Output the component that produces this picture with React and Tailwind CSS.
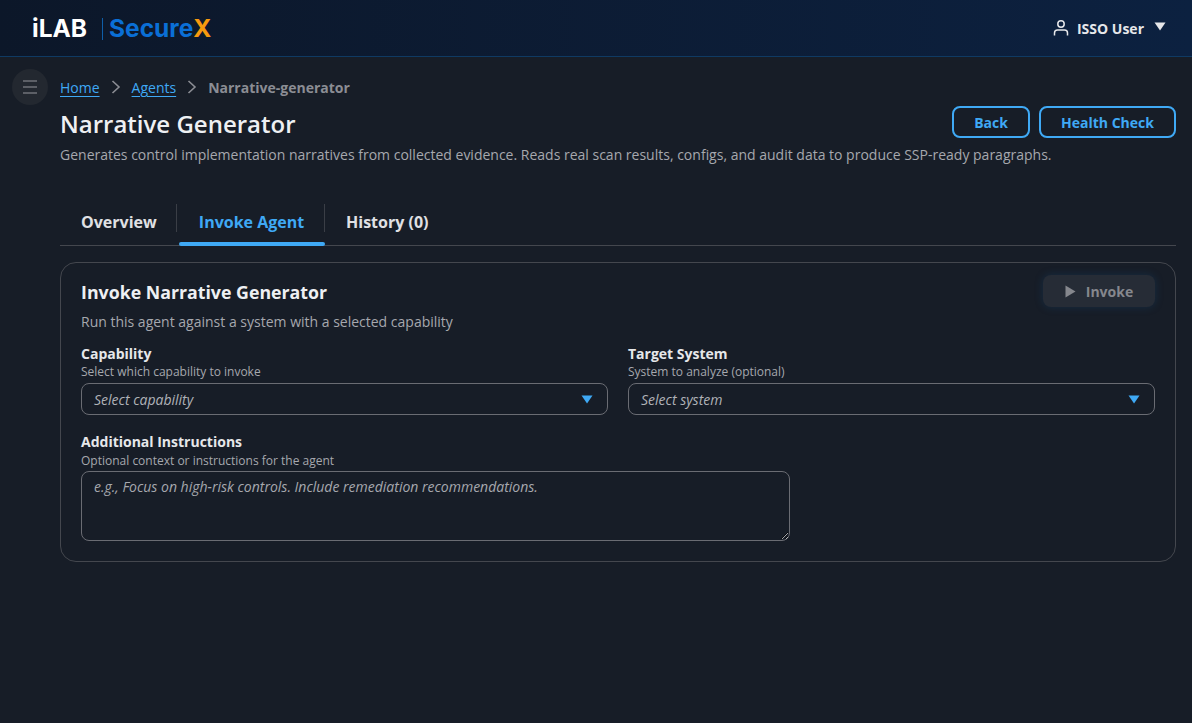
import React from "react";

function Chevron() {
  return (
    <svg width="16" height="16" viewBox="0 0 16 16" fill="none" className="mx-[8px]">
      <path d="M4.5 2 11 8 4.5 14" stroke="#8b8d94" strokeWidth="1.6" />
    </svg>
  );
}

function Caret({ color, w = 12, h = 9 }) {
  return (
    <svg width={w} height={h} viewBox="0 0 12 9">
      <path d="M0.5 0.5h11L6 8.5z" fill={color} />
    </svg>
  );
}

function Field({ label, help, placeholder }) {
  return (
    <div>
      <div className="text-[14px] leading-[19px] font-bold text-[#e6e7ea]">{label}</div>
      <div className="mt-[1px] text-[12px] leading-[16px] text-[#a6a8ae] mb-[3px]">{help}</div>
      <div className="h-[32px] flex items-center justify-between rounded-[8px] border border-[#6a6c73] pl-[12px] pr-[14px]">
        <span className="text-[14px] italic text-[#b0b2b8]">{placeholder}</span>
        <Caret color="#3fa9f5" />
      </div>
    </div>
  );
}

export default function App() {
  return (
    <div className="relative min-h-[723px] bg-[#171d27] font-['Open_Sans',sans-serif]">
      <header className="h-[57px] flex items-center justify-between border-b border-[#0f3a63] bg-gradient-to-r from-[#0c1729] to-[#0c2140] pl-[32px] pr-[26px]">
        <div className="mt-[1px] flex items-center font-['Inter',sans-serif] font-bold text-[24.5px]">
          <span className="text-white">iLAB</span>
          <span className="w-px h-[22px] bg-[#0f5ea8] ml-[15px] mr-[6px]" />
          <span className="text-[#0a6fd6]">Secure</span>
          <span className="text-[#f79a0e]">X</span>
        </div>
        <div className="flex items-center text-[#e6e7ea]">
          <svg width="16" height="18" viewBox="0 0 16 18" fill="none" stroke="currentColor" strokeWidth="1.5">
            <circle cx="8" cy="5" r="3.2" />
            <path d="M1.5 16.5v-2.5a3 3 0 0 1 3-3h7a3 3 0 0 1 3 3v2.5" />
          </svg>
          <span className="ml-[8px] text-[14px] font-bold">ISSO User</span>
          <span className="ml-[10px] mb-[3px]"><Caret color="#e6e7ea" /></span>
        </div>
      </header>

      <button className="absolute left-[12px] top-[69px] w-[36px] h-[36px] rounded-full bg-[#232830] flex flex-col items-center justify-center gap-[4px]">
        <span className="block w-[14px] h-[2px] bg-[#5c5f66]" />
        <span className="block w-[14px] h-[2px] bg-[#5c5f66]" />
        <span className="block w-[14px] h-[2px] bg-[#5c5f66]" />
      </button>

      <main className="pl-[60px] pr-[16px] pt-[20px]">
        <nav className="flex items-center h-[20px] text-[14px]">
          <a className="text-[#3fa9f5] underline underline-offset-[3px]">Home</a>
          <Chevron />
          <a className="text-[#3fa9f5] underline underline-offset-[3px]">Agents</a>
          <Chevron />
          <span className="font-bold text-[#8b8d94]">Narrative-generator</span>
        </nav>

        <div className="flex items-start justify-between mt-[9px] h-[36px]">
          <h1 className="text-[24px] leading-[36px] font-semibold text-[#eef0f3]">Narrative Generator</h1>
          <div className="flex gap-[9px]">
            <button className="h-[32px] w-[78px] rounded-[8px] border-2 border-[#3fa9f5] text-[14px] font-bold text-[#3fa9f5]">Back</button>
            <button className="h-[32px] w-[137px] rounded-[8px] border-2 border-[#3fa9f5] text-[14px] font-bold text-[#3fa9f5]">Health Check</button>
          </div>
        </div>
        <p className="mt-[3px] text-[14px] leading-[20px] text-[#a6a8ae]">
          Generates control implementation narratives from collected evidence. Reads real scan results, configs, and audit data to produce SSP-ready paragraphs.
        </p>

        <div className="mt-[35px] flex h-[46px] border-b border-[#44474e]">
          <div className="relative w-[117px] pl-[21px] pb-[2px] flex items-center h-[45px] text-[16px] font-bold text-[#e0e1e4]">
            Overview
            <span className="absolute right-0 top-[4px] h-[28px] w-px bg-[#3a3e46]" />
          </div>
          <div className="relative w-[148px] pl-[1px] pb-[2px] flex items-center justify-center h-[45px] text-[16px] font-bold text-[#3fa9f5]">
            Invoke Agent
            <span className="absolute left-[2px] right-0 bottom-[-1px] h-[4px] rounded-[2px] bg-[#3fa9f5]" />
            <span className="absolute right-0 top-[4px] h-[28px] w-px bg-[#3a3e46]" />
          </div>
          <div className="pl-[21px] pb-[2px] flex items-center h-[45px] text-[16px] font-bold text-[#e0e1e4]">History (0)</div>
        </div>

        <section className="mt-[16px] h-[300px] rounded-[16px] border border-[#44474e] px-[20px] pt-[12px]">
          <div className="flex items-start justify-between h-[32px]">
            <h2 className="mt-[3px] text-[17.75px] leading-[28px] font-bold text-[#eef0f3]">Invoke Narrative Generator</h2>
            <button className="h-[32px] w-[112px] rounded-[8px] bg-[#262c36] shadow-[0_0_8px_rgba(20,90,150,0.25)] flex items-center justify-center gap-[10px] text-[14px] font-bold text-[#85878d]">
              <svg width="11" height="13" viewBox="0 0 11 13"><path d="M0.5 0.5 10.5 6.5 0.5 12.5z" fill="#85878d" /></svg>
              Invoke
            </button>
          </div>
          <p className="mt-[5px] text-[14px] leading-[20px] text-[#a6a8ae]">Run this agent against a system with a selected capability</p>

          <div className="mt-[12px] grid grid-cols-2 gap-x-[20px]">
            <Field label="Capability" help="Select which capability to invoke" placeholder="Select capability" />
            <Field label="Target System" help="System to analyze (optional)" placeholder="Select system" />
          </div>

          <div className="mt-[17px]">
            <div className="text-[14px] leading-[19px] font-bold text-[#e6e7ea]">Additional Instructions</div>
            <div className="mt-[2px] text-[12px] leading-[16px] text-[#a6a8ae] mb-[2px]">Optional context or instructions for the agent</div>
            <textarea
              readOnly
              placeholder="e.g., Focus on high-risk controls. Include remediation recommendations."
              className="block w-[709px] h-[70px] rounded-[8px] border border-[#6a6c73] bg-transparent px-[12px] py-[5px] text-[14px] leading-[20px] italic text-[#b0b2b8] placeholder:text-[#a6a8ae] outline-none"
            />
          </div>
        </section>
      </main>
    </div>
  );
}
